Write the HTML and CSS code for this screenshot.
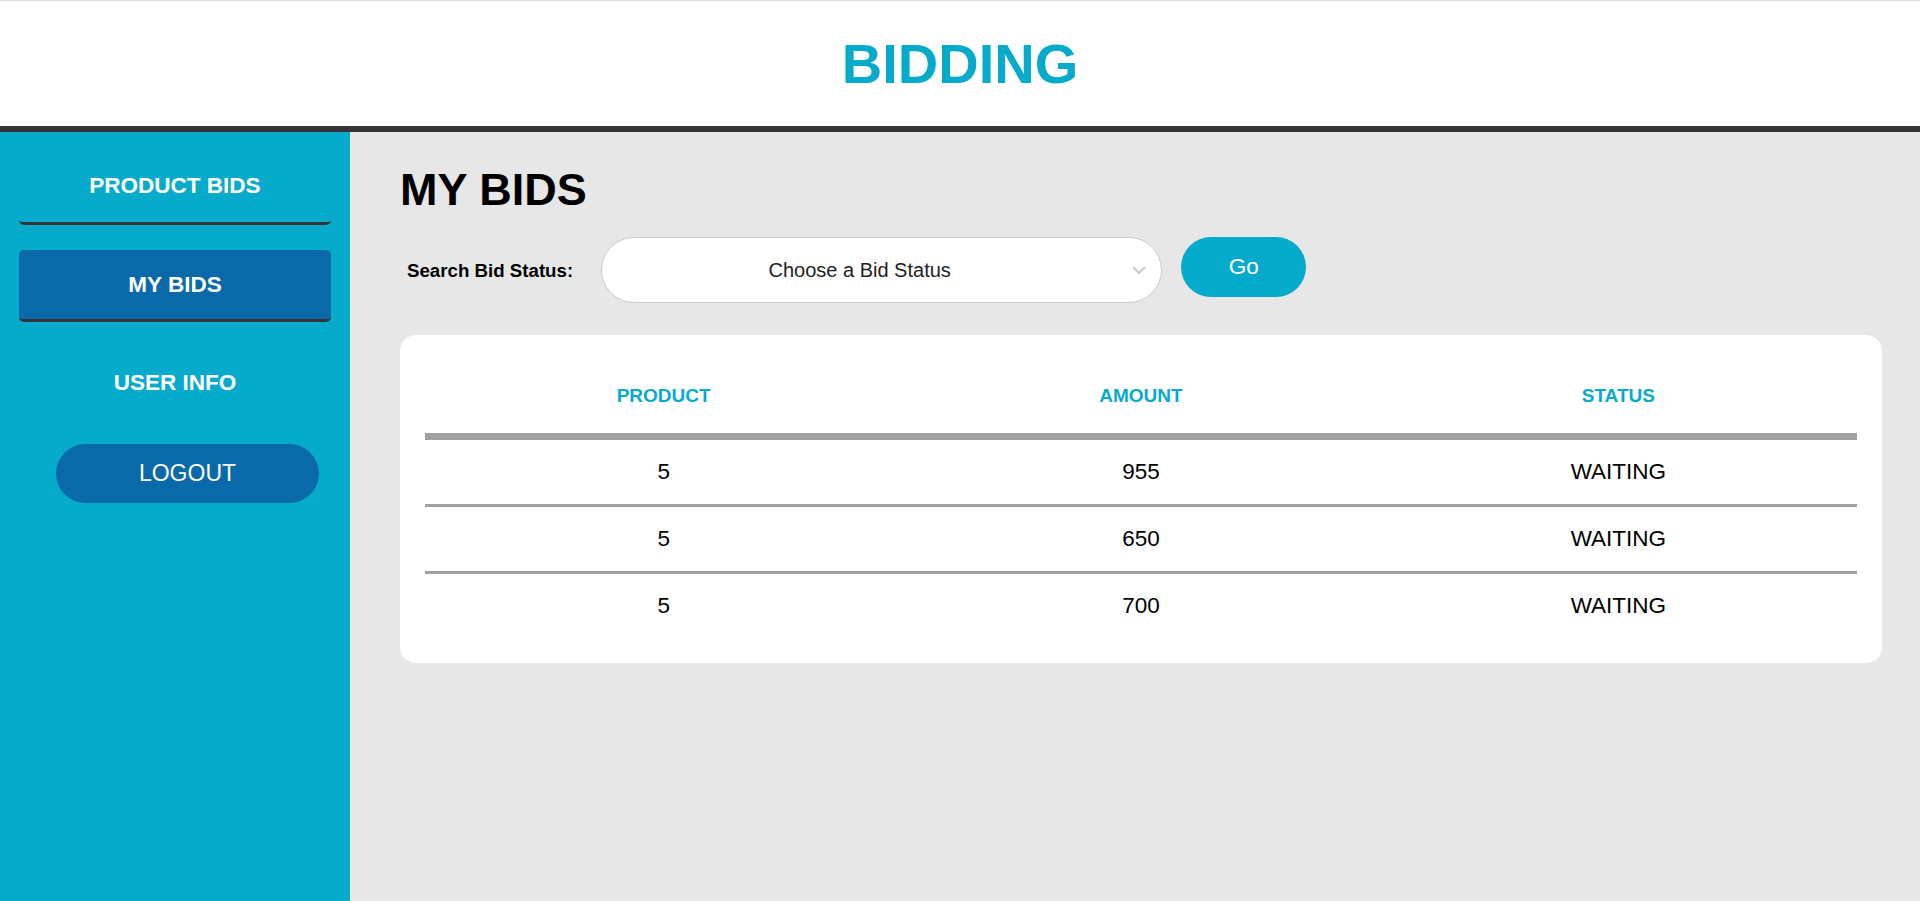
FILE: index.html
```html
<!DOCTYPE html>
<html lang="en">
<head>
<meta charset="utf-8">
<title>Bidding - My Bids</title>
<link rel="stylesheet" href="styles.css">
</head>
<body>
<header class="topbar">
  <h1 class="brand">BIDDING</h1>
</header>
<div class="layout">
  <aside class="sidebar">
    <nav class="nav">
      <a class="nav-item nav-item--underlined" href="#">PRODUCT BIDS</a>
      <a class="nav-item nav-item--active" href="#">MY BIDS</a>
      <a class="nav-item nav-item--plain" href="#">USER INFO</a>
    </nav>
    <button class="logout" type="button">LOGOUT</button>
  </aside>
  <main class="content">
    <h2 class="page-title">MY BIDS</h2>
    <form class="search">
      <label class="search-label" for="status">Search Bid Status:</label>
      <div class="select-wrap">
        <select class="select" id="status">
          <option>Choose a Bid Status</option>
          <option>WAITING</option>
          <option>ACCEPTED</option>
          <option>REJECTED</option>
        </select>
        <svg class="select-arrow" width="14" height="8" viewBox="0 0 14 8" aria-hidden="true">
          <path d="M1 1 L7 7 L13 1" fill="none" stroke="#c9c9c9" stroke-width="2"/>
        </svg>
      </div>
      <button class="go" type="button">Go</button>
    </form>
    <section class="card">
      <table class="bids">
        <thead>
          <tr><th>PRODUCT</th><th>AMOUNT</th><th>STATUS</th></tr>
        </thead>
        <tbody>
          <tr><td>5</td><td>955</td><td>WAITING</td></tr>
          <tr><td>5</td><td>650</td><td>WAITING</td></tr>
          <tr><td>5</td><td>700</td><td>WAITING</td></tr>
        </tbody>
      </table>
    </section>
  </main>
</div>
</body>
</html>
```

FILE: styles.css
```css
* {
  box-sizing: border-box;
}

html, body {
  margin: 0;
  padding: 0;
  height: 100%;
}

body {
  display: flex;
  flex-direction: column;
  font-family: "Liberation Sans", Arial, sans-serif;
  background: #e7e7e7;
  color: #000;
}

.topbar {
  flex: 0 0 auto;
  height: 132px;
  background: #fff;
  border-top: 1px solid #dcdce0;
  border-bottom: 6px solid #333333;
  display: flex;
  align-items: center;
  justify-content: center;
}

.brand {
  margin: 0;
  font-size: 56px;
  line-height: 1;
  font-weight: 700;
  color: #06abcc;
}

.layout {
  flex: 1 1 auto;
  display: flex;
  min-height: 0;
}

.sidebar {
  flex: 0 0 350px;
  background: #06abcc;
  padding: 19px 19px 0;
  display: flex;
  flex-direction: column;
}

.nav {
  display: flex;
  flex-direction: column;
  gap: 25px;
}

.nav-item {
  height: 72px;
  display: flex;
  align-items: center;
  justify-content: center;
  border-bottom: 3px solid transparent;
  border-radius: 5px;
  color: #fff;
  font-size: 22.5px;
  font-weight: 700;
  text-decoration: none;
}

.nav-item--underlined {
  height: 74px;
  padding-bottom: 2px;
  border-bottom-color: #333333;
}

.nav-item--active {
  background: #0a69a9;
  border-bottom-color: #333333;
}

.nav-item--plain {
  padding-top: 2px;
}

.logout {
  margin: 25px 0 0 37px;
  width: 263px;
  height: 59px;
  border: none;
  border-radius: 30px;
  background: #0a69a9;
  color: #fff;
  font-family: inherit;
  font-size: 23px;
  cursor: pointer;
}

.content {
  flex: 1 1 auto;
  padding: 32px 38px 0 50px;
}

.page-title {
  margin: 0;
  font-size: 45px;
  line-height: 51px;
  font-weight: 700;
}

.search {
  margin-top: 22px;
  display: flex;
  align-items: flex-start;
}

.search-label {
  flex: 0 0 auto;
  align-self: center;
  margin: 2px 28px 0 7px;
  font-size: 18.7px;
  font-weight: 700;
}

.select-wrap {
  position: relative;
  width: 561px;
  height: 66px;
}

.select {
  width: 100%;
  height: 100%;
  appearance: none;
  -webkit-appearance: none;
  border: 1px solid #cccccc;
  border-radius: 33px;
  background: #fff;
  padding: 0 64px 0 20px;
  font-family: inherit;
  font-size: 20px;
  color: #222;
  text-align: center;
  text-align-last: center;
  outline: none;
}

.select-arrow {
  position: absolute;
  right: 16px;
  top: 29px;
  pointer-events: none;
}

.go {
  margin-left: 19px;
  width: 125px;
  height: 60px;
  border: none;
  border-radius: 30px;
  background: #06abcc;
  color: #fff;
  font-family: inherit;
  font-size: 22.5px;
  cursor: pointer;
}

.card {
  margin-top: 32px;
  background: #fff;
  border-radius: 16px;
  padding: 25px;
}

.bids {
  width: 100%;
  border-collapse: separate;
  border-spacing: 0;
  table-layout: fixed;
}

.bids th {
  height: 80px;
  padding: 0 0 2px;
  border-bottom: 7px solid #a1a1a1;
  color: #06abcc;
  font-size: 19px;
  font-weight: 700;
  text-align: center;
  vertical-align: middle;
}

.bids td {
  height: 64px;
  padding: 0;
  font-size: 22.5px;
  text-align: center;
  vertical-align: middle;
}

.bids tbody tr + tr td {
  height: 67px;
  border-top: 3px solid #a1a1a1;
}
```
